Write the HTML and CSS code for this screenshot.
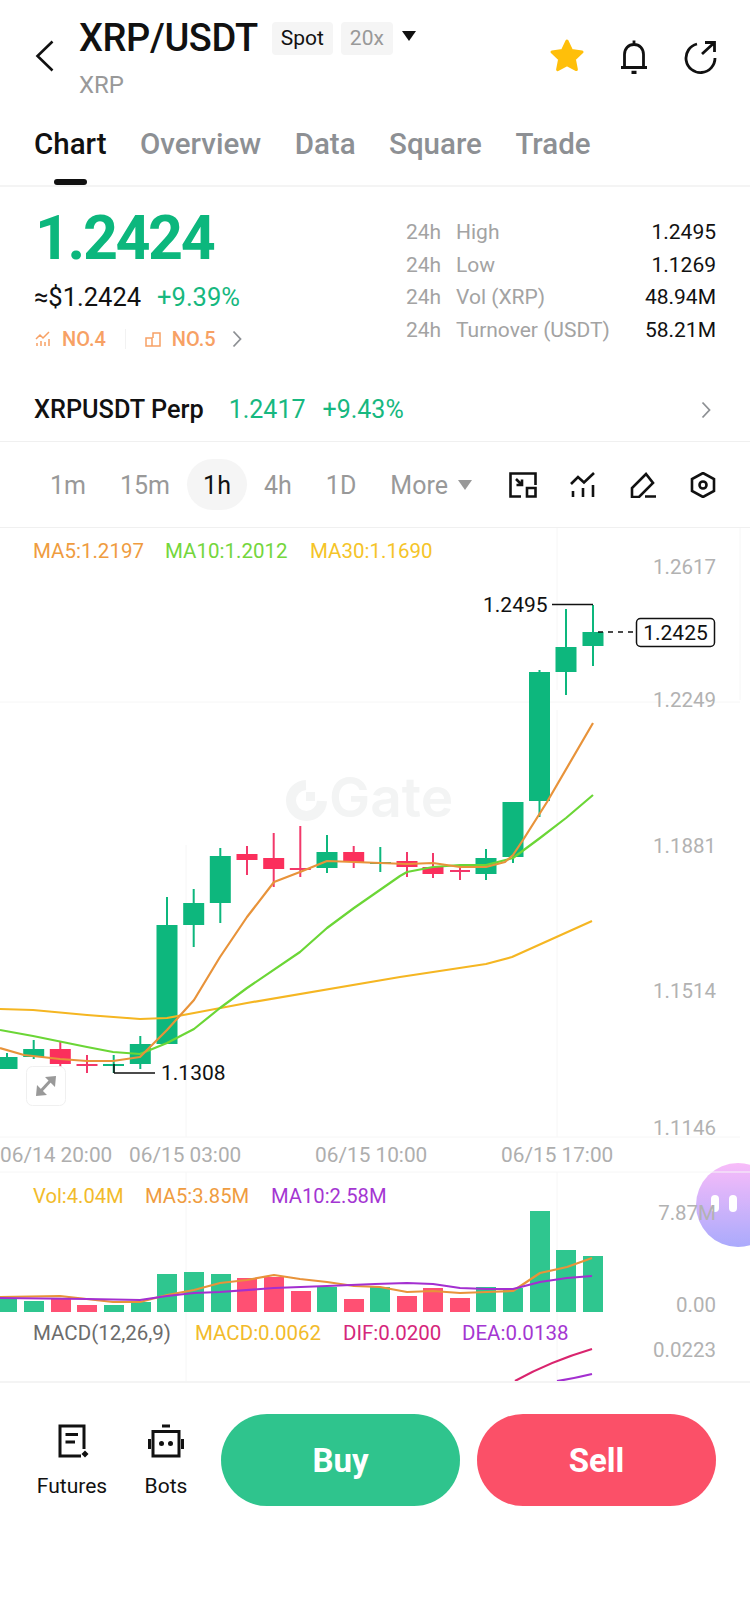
FILE: index.html
```html
<!DOCTYPE html>
<html lang="en">
<head>
<meta charset="utf-8">
<title>XRP/USDT</title>
<link rel="stylesheet" href="styles.css">
</head>
<body>
<div class="page">
  <section class="top">
    <header class="head">
      <svg class="back" viewBox="0 0 20 32"><path d="M17.5 1.5 L2.5 16 L17.5 30.5"/></svg>
      <div class="titles">
        <div class="title-row">
          <h1 class="pair">XRP/USDT</h1>
          <span class="badge badge-on">Spot</span>
          <span class="badge badge-off">20x</span>
          <span class="caret"></span>
        </div>
        <div class="sub">XRP</div>
      </div>
      <div class="actions">
        <svg class="ico36" viewBox="0 0 36 36"><path class="star" d="M18 3 L22.6 12.6 L33 14 L25.4 21.2 L27.4 31.6 L18 26.6 L8.6 31.6 L10.6 21.2 L3 14 L13.4 12.6 Z"/></svg>
        <svg class="ico36" viewBox="0 0 36 36"><path class="ln" d="M5 29.5 H31 M8.5 29 V16.5 C8.5 10.5 12.5 6.5 18 6.500 C23.500 6.500 27.500 10.500 27.500 16.500 V29 M18 2.500 V6"/><path class="ln thick" d="M15.500 34.500 H20.500"/></svg>
        <svg class="ico36" viewBox="0 0 36 36"><path class="ln" d="M14 6 A14.500 14.500 0 1 0 32 20 M19 16 L31.500 4.500 M22 4.500 H31.500 V14"/></svg>
      </div>
    </header>
    <nav class="tabs">
      <div class="tab tab-on">Chart<i class="ind"></i></div>
      <div class="tab">Overview</div>
      <div class="tab">Data</div>
      <div class="tab">Square</div>
      <div class="tab">Trade</div>
    </nav>
  </section>

  <section class="summary">
    <div class="sum-row">
      <div class="sum-left">
        <div class="price">1.2424</div>
        <div class="usd"><span>≈$1.2424</span><span class="up">+9.39%</span></div>
        <div class="rank">
          <svg class="ico16" viewBox="0 0 16 16"><path d="M1 8 L5 4 L8 7 L14 1 M2 12 V15 M6 10 V15 M10 11 V15 M14 8 V15"/></svg>
          <span class="no">NO.4</span>
          <i class="sep"></i>
          <svg class="ico16" viewBox="0 0 16 16"><path d="M1 7 H7 V15 H1 Z M7 15 H15 V2 H8 V7"/></svg>
          <span class="no">NO.5</span>
          <svg class="chev" viewBox="0 0 10 18"><path d="M1.500 1.500 L8.500 9 L1.500 16.500"/></svg>
        </div>
      </div>
      <dl class="stats">
        <div class="stat"><dt>24h</dt><dd class="lbl">High</dd><dd class="val">1.2495</dd></div>
        <div class="stat"><dt>24h</dt><dd class="lbl">Low</dd><dd class="val">1.1269</dd></div>
        <div class="stat"><dt>24h</dt><dd class="lbl">Vol (XRP)</dd><dd class="val">48.94M</dd></div>
        <div class="stat"><dt>24h</dt><dd class="lbl">Turnover (USDT)</dd><dd class="val">58.21M</dd></div>
      </dl>
    </div>
    <div class="perp">
      <span class="perp-name">XRPUSDT Perp</span>
      <span class="up perp-price">1.2417</span>
      <span class="up">+9.43%</span>
      <svg class="chev chev-end" viewBox="0 0 10 18"><path d="M1.500 1.500 L8.500 9 L1.500 16.500"/></svg>
    </div>
  </section>

  <section class="frames">
    <span class="fr">1m</span>
    <span class="fr">15m</span>
    <span class="fr fr-on">1h</span>
    <span class="fr">4h</span>
    <span class="fr">1D</span>
    <span class="fr fr-more">More<i class="caret caret-grey"></i></span>
    <div class="tools">
      <svg class="ico28" viewBox="0 0 28 26"><path d="M12 24.500 H1.500 V1.500 H26.500 V13 M7 7 L13 13 M13 7.500 V13 H7.500"/><path d="M18 16 H26.500 V24.500 H18 Z"/></svg>
      <svg class="ico28" viewBox="0 0 28 26"><path d="M2 12 L9 5 L15 10.500 L25 1 M4 19 V25 M14 16 V25 M24 13 V25"/></svg>
      <svg class="ico28" viewBox="0 0 28 26"><path d="M3 25 H10 L24 11 L17 2 L3 16 Z M16 24.500 H27"/></svg>
      <svg class="ico28" viewBox="0 0 28 26"><path d="M14 1 L25 7 V19 L14 25 L3 19 V7 Z"/><circle cx="14" cy="13" r="3.500"/></svg>
    </div>
  </section>

  <div class="float"><i class="eye"></i><i class="eye"></i></div>

  <svg class="chart" viewBox="0 528 750 853">
    <g class="grid">
      <path d="M0 702 H740 M0 1137 H740 M186 845 V1137 M186 1172 V1381 M557 528 V690 M557 710 V1137 M557 1172 V1381 M740 528 V700 M0 1172 H750"/>
    </g>

    <g class="wm">
      <path class="wm-ring" d="M306 785 A15.500 15.500 0 1 0 322 801"/>
      <path class="wm-dot" d="M306 792 H315 V801 H306 Z"/>
      <text class="wm-text" x="329" y="817">Gate</text>
    </g>

    <text class="t c-o" x="33" y="558">MA5:1.2197</text>
    <text class="t c-g" x="165" y="558">MA10:1.2012</text>
    <text class="t c-y" x="310" y="558">MA30:1.1690</text>

    <g class="axis">
      <text x="716" y="574">1.2617</text>
      <text x="716" y="707">1.2249</text>
      <text x="716" y="853">1.1881</text>
      <text x="716" y="998">1.1514</text>
      <text x="716" y="1135">1.1146</text>
      <text x="716" y="1220">7.87M</text>
      <text x="716" y="1312">0.00</text>
      <text x="716" y="1357">0.0223</text>
    </g>

    <g class="wick g">
      <path d="M7 1053 V1069 M33.700 1040 V1059 M113.700 1055 V1073 M140.300 1036 V1069 M167 897 V1044 M193.700 889 V947 M220.300 848 V923 M327 835 V873 M380.300 847 V872 M486 849 V880 M513 802 V863 M539.500 670 V817 M566 609 V695 M593 605 V666"/>
      <path d="M103 1065 H124 M370 863 H391"/>
    </g>
    <g class="wick r">
      <path d="M60.300 1042 V1067 M87 1055 V1073 M247 846 V875 M273.700 833 V887 M300.300 826 V877 M353.700 846 V868 M407 852 V877 M433 853 V878 M460 865 V880"/>
      <path d="M76.500 1065 H97.500 M289.800 869 H310.800 M450 871 H470"/>
    </g>
    <g class="body g">
      <rect x="-3.500" y="1057" width="21" height="12"/>
      <rect x="23.200" y="1049" width="21" height="8"/>
      <rect x="129.800" y="1044" width="21" height="20"/>
      <rect x="156.500" y="925" width="21" height="119"/>
      <rect x="183.200" y="903" width="21" height="22"/>
      <rect x="209.800" y="856" width="21" height="47"/>
      <rect x="316.500" y="852" width="21" height="16"/>
      <rect x="475.500" y="858" width="21" height="16"/>
      <rect x="502.500" y="802" width="21" height="55"/>
      <rect x="529" y="672" width="21" height="129"/>
      <rect x="555.500" y="647" width="21" height="25"/>
      <rect x="582.500" y="632" width="21" height="14"/>
    </g>
    <g class="body r">
      <rect x="49.800" y="1049" width="21" height="15"/>
      <rect x="236.500" y="854" width="21" height="6"/>
      <rect x="263.200" y="858" width="21" height="11"/>
      <rect x="343.200" y="852" width="21" height="10"/>
      <rect x="396.500" y="861" width="21" height="6"/>
      <rect x="422.500" y="867" width="21" height="7"/>
    </g>

    <polyline class="ma m30" points="0,1009 33,1010 87,1015 140,1019 167,1018 194,1013 247,1003 400,977 486,964 512,957 592,921"/>
    <polyline class="ma m10" points="0,1030 33,1036 87,1047 113,1052 140,1054 167,1043 194,1029 220,1008 247,988 300,952 327,928 354,908 400,876 407,872 433,867 460,865 486,865 513,858 540,838 566,818 593,795"/>
    <polyline class="ma m5" points="0,1048 24,1055 60,1059 87,1061 113,1061 140,1057 167,1030 194,1000 220,957 247,917 274,882 300,872 327,861 354,862 407,864 433,863 460,867 486,867 505,862 513,855 523,840 547,802 593,723"/>

    <path class="mark" d="M552 604.500 H593 M114 1073 H155 M114 1064 V1073"/>
    <path class="dash" d="M598 632 H636"/>
    <rect class="pricebox" x="636.500" y="618.500" width="78" height="28" rx="4"/>
    <text class="tk c-k" x="675.500" y="640" text-anchor="middle">1.2425</text>
    <text class="tk c-k" x="483" y="612">1.2495</text>
    <text class="tk c-k" x="161" y="1080">1.1308</text>

    <rect class="xbtn" x="26.500" y="1066.500" width="39" height="39" rx="6"/>
    <path class="xarr" d="M39 1093 L52 1079"/>
    <path class="xhead" d="M56 1076 L45 1077 L55 1087 Z M36 1096 L37 1085 L47 1095 Z"/>

    <g class="axis-x">
      <text x="0" y="1162">06/14 20:00</text>
      <text x="129" y="1162">06/15 03:00</text>
      <text x="315" y="1162">06/15 10:00</text>
      <text x="501" y="1162">06/15 17:00</text>
    </g>

    <text class="tv c-v" x="33" y="1203">Vol:4.04M</text>
    <text class="tv c-o" x="145" y="1203">MA5:3.85M</text>
    <text class="tv c-p" x="271" y="1203">MA10:2.58M</text>

    <g class="vol g2">
      <rect x="0" y="1299" width="17" height="13"/>
      <rect x="24" y="1301" width="20" height="11"/>
      <rect x="104" y="1305" width="20" height="7"/>
      <rect x="131" y="1302" width="20" height="10"/>
      <rect x="157" y="1274" width="20" height="38"/>
      <rect x="184" y="1272" width="20" height="40"/>
      <rect x="211" y="1274" width="20" height="38"/>
      <rect x="317" y="1287" width="20" height="25"/>
      <rect x="370" y="1287" width="20" height="25"/>
      <rect x="476" y="1287" width="20" height="25"/>
      <rect x="503" y="1288" width="20" height="24"/>
      <rect x="530" y="1211" width="20" height="101"/>
      <rect x="556" y="1250" width="20" height="62"/>
      <rect x="583" y="1256" width="20" height="56"/>
    </g>
    <g class="vol r2">
      <rect x="51" y="1298" width="20" height="14"/>
      <rect x="77" y="1305" width="20" height="7"/>
      <rect x="237" y="1278" width="20" height="34"/>
      <rect x="264" y="1277" width="20" height="35"/>
      <rect x="291" y="1291" width="20" height="21"/>
      <rect x="344" y="1299" width="20" height="13"/>
      <rect x="397" y="1296" width="20" height="16"/>
      <rect x="423" y="1288" width="20" height="24"/>
      <rect x="450" y="1298" width="20" height="14"/>
    </g>
    <polyline class="ma m5" points="0,1297 60,1296 113,1302 140,1302 167,1295 194,1290 220,1283 247,1280 274,1275 300,1279 327,1282 354,1286 380,1287 407,1292 433,1291 460,1293 487,1292 513,1291 540,1273 567,1267 592,1258"/>
    <polyline class="ma mp" points="0,1298 87,1299 140,1300 167,1296 194,1293 220,1292 274,1288 327,1286 375,1284 407,1283 433,1284 460,1288 487,1289 513,1289 540,1282 567,1278 592,1276"/>

    <text class="t c-m" x="33" y="1340">MACD(12,26,9)</text>
    <text class="t c-v" x="195" y="1340">MACD:0.0062</text>
    <text class="t c-d" x="343" y="1340">DIF:0.0200</text>
    <text class="t c-p" x="462" y="1340">DEA:0.0138</text>

    <path class="ma md" d="M515 1381 C540 1367 565 1357 592 1349"/>
    <path class="ma mp" d="M557 1381 C570 1379 580 1377 592 1374"/>
  </svg>

  <footer class="bottom">
    <div class="act act-f">
      <svg class="ico-b" viewBox="0 0 34 34"><path class="b" d="M29 25 V2 H5 V32 H26 M10.500 10.500 H23 M10.500 18 H20"/><path class="bd" d="M30 26.500 L33.500 30 L30 33.500 L26.500 30 Z"/></svg>
      <span>Futures</span>
    </div>
    <div class="act act-b">
      <svg class="ico-b" viewBox="0 0 36 34"><path class="b" d="M5 7.500 H31 V32 H5 Z M14 2 H22 M1.500 15 V25 M34.500 15 V25"/><circle class="bd" cx="13.500" cy="19.500" r="2.500"/><circle class="bd" cx="22.500" cy="19.500" r="2.500"/></svg>
      <span>Bots</span>
    </div>
    <button class="btn buy">Buy</button>
    <button class="btn sell">Sell</button>
  </footer>
</div>
</body>
</html>
```
FILE: styles.css
```css
* { box-sizing: border-box; }
html, body { margin: 0; padding: 0; background: #fff; }
body { font-family: Roboto, "Noto Sans", sans-serif; color: #111; }
.page { position: relative; width: 750px; height: 1623px; overflow: hidden; background: #fff; }

/* header */
.top { height: 187px; border-bottom: 2px solid #f4f4f4; }
.head { display: flex; height: 118px; padding: 20px 31px 0 35px; }
.back { width: 20px; height: 32px; margin-top: 20px; fill: none; stroke: #111; stroke-width: 2.6; }
.titles { margin-left: 24px; }
.title-row { display: flex; align-items: center; height: 36px; }
.pair { margin: 0; font-size: 38px; line-height: 36px; font-weight: 500; letter-spacing: -0.4px; }
.badge { display: block; height: 33px; line-height: 33px; padding: 0 9px; border-radius: 4px; background: #f5f5f5; font-size: 21px; }
.badge-on { margin-left: 14px; color: #111; }
.badge-off { margin-left: 8px; color: #999; }
.caret { display: block; width: 0; height: 0; margin: -4px 0 0 9px; border-left: 7px solid transparent; border-right: 7px solid transparent; border-top: 10px solid #111; }
.caret-grey { display: inline-block; margin: 0 0 4px 10px; border-top-color: #999; vertical-align: middle; }
.sub { margin-top: 15px; font-size: 24px; line-height: 28px; color: #999; }
.actions { display: flex; gap: 31px; margin: 18px 0 0 auto; }
.ico36 { width: 36px; height: 36px; }
.star { fill: #ffbf0a; stroke: #ffbf0a; stroke-width: 3; stroke-linejoin: round; }
.ln { fill: none; stroke: #111; stroke-width: 2.8; }
.thick { stroke-width: 3.5; }

.tabs { display: flex; gap: 33.500px; padding: 9px 0 0 34px; }
.tab { display: flex; flex-direction: column; align-items: center; font-size: 29.500px; line-height: 34px; font-weight: 500; color: #8d9094; }
.tab-on { color: #111; }
.ind { display: block; width: 33px; height: 6px; margin-top: 18px; border-radius: 3px; background: #111; }

/* summary */
.summary { height: 254px; padding: 0 34px; }
.sum-row { display: flex; justify-content: space-between; height: 206px; }
.sum-left { padding: 21px 0 0 1px; }
.price { font-size: 61px; line-height: 60px; font-weight: 700; color: #0cb77d; letter-spacing: -2.400px; }
.usd { display: flex; gap: 16px; margin: 13px 0 0 -1px; font-size: 25.500px; line-height: 32px; }
.up { color: #17b880; }
.rank { display: flex; align-items: center; margin: 14px 0 0 0; height: 24px; color: #f7a165; font-size: 20px; font-weight: 500; }
.ico16 { width: 16px; height: 16px; fill: none; stroke: #f7a165; stroke-width: 1.500; }
.no { margin-left: 11px; }
.sep { display: block; width: 1px; height: 20px; margin: 0 19px; background: #f2f2f2; }
.chev { width: 10px; height: 18px; margin-left: 16px; fill: none; stroke: #8d9094; stroke-width: 1.800; }
.stats { width: 310px; margin: 29px 0 0; }
.stat { display: flex; height: 32.500px; align-items: center; font-size: 21px; }
.stat dt { width: 50px; color: #a3a3a3; }
.stat dd { margin: 0; }
.lbl { color: #a3a3a3; }
.val { margin-left: auto !important; color: #111; }
.perp { display: flex; align-items: center; height: 32px; padding-top: 1px; font-size: 25px; }
.perp-name { font-size: 25.300px; font-weight: 500; margin-right: 25px; }
.perp-price { margin-right: 17px; }
.chev-end { margin-left: auto; margin-right: 5px; }

/* frames */
.frames { display: flex; align-items: center; height: 87px; padding-left: 33px; border-top: 1px solid #f0f0f0; border-bottom: 1px solid #f0f0f0; font-size: 25px; color: #999; }
.fr { display: block; height: 51px; line-height: 53px; padding: 0 17px; text-align: center; }
.fr-on { width: 60px; padding: 0; border-radius: 26px; background: #f5f5f5; color: #111; }
.fr-more { padding-right: 0; }
.tools { display: flex; gap: 32px; margin-left: auto; padding-right: 33px; }
.ico28 { width: 28px; height: 26px; fill: none; stroke: #111; stroke-width: 2.600; }

/* chart */
.chart { position: relative; z-index: 1; display: block; width: 750px; height: 853px; }
.grid path { fill: none; stroke: #f6f6f6; stroke-width: 1; }
.wm-ring { fill: none; stroke: #f3f4f4; stroke-width: 10; }
.wm-dot { fill: #f3f4f4; }
.wm-text { font-family: Inter, Roboto, sans-serif; font-size: 55px; font-weight: 600; fill: #f3f4f4; }
.t { font-size: 20.500px; }
.tv { font-size: 20.200px; }
.tk { font-size: 21px; }
.c-o { fill: #ef9c3f; }
.c-g { fill: #74d63c; }
.c-y { fill: #f5c428; }
.c-k { fill: #111; }
.c-v { fill: #f2bb2b; }
.c-p { fill: #a436d2; }
.c-m { fill: #6c6c6c; }
.c-d { fill: #d5267b; }
.axis text { font-size: 20.500px; fill: #b2b2b2; text-anchor: end; }
.axis-x text { font-size: 20.800px; fill: #aeaeae; }
.wick path { fill: none; stroke-width: 2; }
.wick.g path { stroke: #0db77d; }
.wick.r path { stroke: #f2386a; }
.body.g rect { fill: #0db77d; }
.body.r rect { fill: #fb2f5c; }
.ma { fill: none; stroke-width: 2.200; stroke-linejoin: round; }
.m5 { stroke: #e8933a; }
.m10 { stroke: #6bd636; }
.m30 { stroke: #f5b622; }
.mp { stroke: #a32fd0; }
.md { stroke: #d9246e; }
.vol.g2 rect { fill: #2fc68f; }
.vol.r2 rect { fill: #ff5073; }
.mark { fill: none; stroke: #111; stroke-width: 1.500; }
.dash { fill: none; stroke: #111; stroke-width: 1.500; stroke-dasharray: 5 5; }
.pricebox { fill: #fff; stroke: #111; stroke-width: 1.500; }
.xbtn { fill: #fff; stroke: #f0f0f0; stroke-width: 1; }
.xarr { fill: none; stroke: #999; stroke-width: 3; }
.xhead { fill: #999; }

/* floating assistant */
.float { position: absolute; left: 696px; top: 1163px; display: flex; gap: 10px; width: 84px; height: 84px; padding: 32px 0 0 15px; border-radius: 50%; background: linear-gradient(#f8b9f9, #a6a6fc); opacity: .95; }
.eye { display: block; width: 8px; height: 17px; border-radius: 4px; background: #fff; }

/* bottom bar */
.bottom { display: flex; align-items: flex-start; padding: 31px 34px 0 37px; border-top: 2px solid #f4f4f4; }
.act { display: flex; flex-direction: column; align-items: center; font-size: 21px; line-height: 24px; color: #111; }
.act-f { width: 70px; padding-top: 10px; }
.act-b { width: 42px; margin-left: 38px; padding-top: 10px; }
.ico-b { display: block; width: 36px; height: 34px; margin-bottom: 16px; overflow: visible; }
.b { fill: none; stroke: #111; stroke-width: 3; }
.bd { fill: #111; }
.btn { display: block; width: 239px; height: 92px; border: 0; border-radius: 46px; color: #fff; font: 700 33px Roboto, sans-serif; }
.buy { margin-left: 34px; background: #2fc48d; }
.sell { margin-left: 17px; background: #fb5068; }
```
